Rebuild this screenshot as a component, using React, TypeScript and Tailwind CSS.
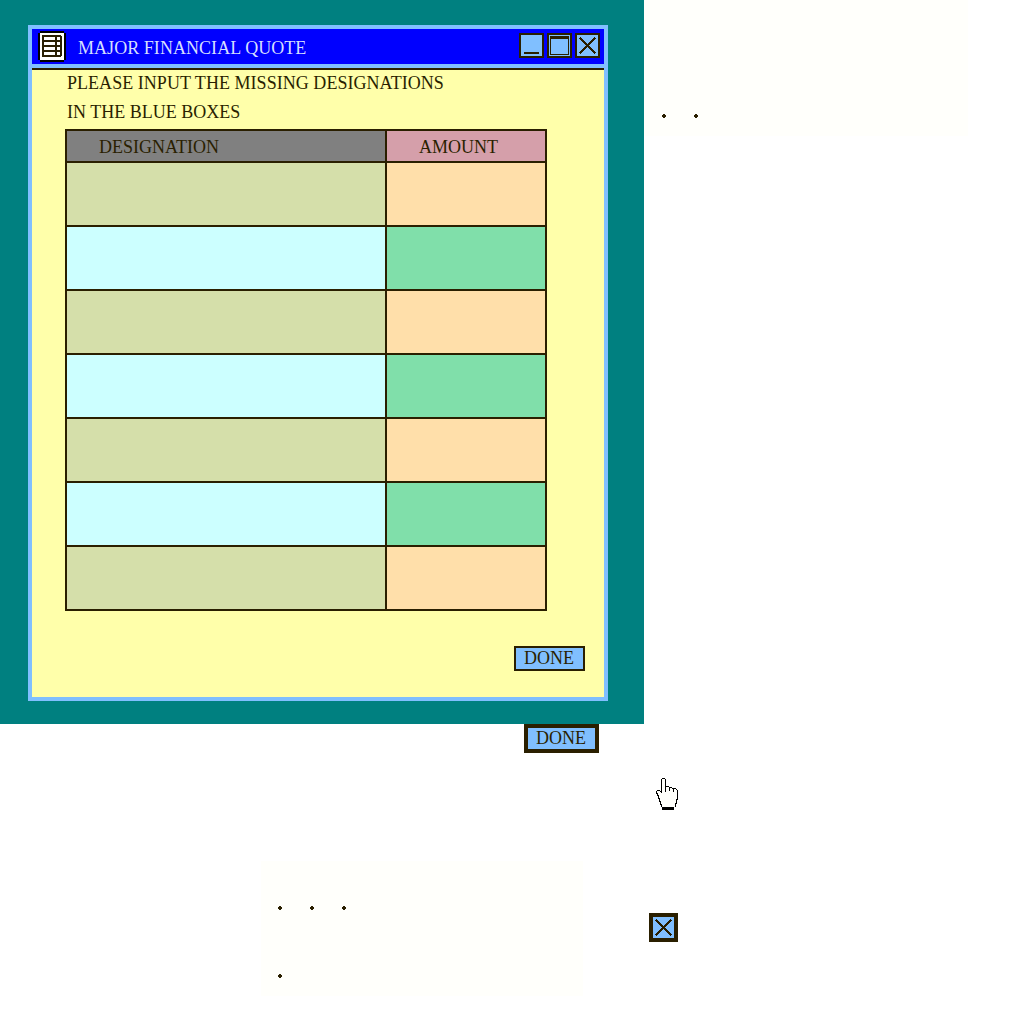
import React from "react";

const INK = "#2a1f00";

function CloseGlyph({ className }: { className?: string }) {
  return (
    <svg className={className} width="17" height="17" viewBox="0 0 17 17" shapeRendering="crispEdges">
      <path d="M0.7 0.7L16.3 16.3M16.3 0.7L0.7 16.3" stroke={INK} strokeWidth="2.2" fill="none" />
    </svg>
  );
}

function SheetIcon() {
  return (
    <svg width="28" height="31" viewBox="0 0 28 31" shapeRendering="crispEdges">
      <path d="M2 0h24v2h2v27h-2v2H2v-2H0V2h2z" fill="#000" />
      <path d="M2 2h24v27H2z" fill="#fffffb" />
      <path d="M4 4h19v1h1v20h-1v1H4z" fill={INK} />
      <path d="M6 6h11v3H6zM6 11h11v3H6zM6 16h11v3H6zM6 21h11v3H6zM19 6h3v3h-3zM19 11h3v3h-3zM19 16h3v3h-3zM19 21h3v3h-3z" fill="#fffffb" />
    </svg>
  );
}

function HandCursor() {
  return (
    <svg width="22" height="32" viewBox="0 0 22 32" shapeRendering="crispEdges">
      <path d="M6 1h3v8h4v1h4v1h3v1h1v10h-1v4h-1v3H6v-3H5v-3H4v-3H3v-3H2v-2H1v-3h4V1z" fill="#fffffb" />
      <path
        fill="#000"
        d="M6 0h3v1H6zM5 1h1v14H5zM9 1h1v13H9zM10 8h3v1h-3zM13 9h1v4h-1zM14 9h2v1h-2zM16 10h1v1h1v3h-1v-3h-1zM17 10h3v1h-3zM20 11h1v1h-1zM21 12h1v10h-1zM20 21h1v5h-1zM19 25h1v4h-1zM1 12h3v1H1zM4 13h1v1H4zM0 13h1v3H0zM1 15h1v3H1zM2 17h1v4H2zM3 20h1v4H3zM4 23h1v4H4zM5 26h1v3H5zM6 29h12v3H6z"
      />
    </svg>
  );
}

function Dot() {
  return (
    <svg width="4" height="4" viewBox="0 0 4 4" shapeRendering="crispEdges">
      <path d="M1 0h2v1h1v2H3v1H1V3H0V1h1z" fill={INK} />
    </svg>
  );
}

function TitleBar() {
  return (
    <div className="flex h-[35px] items-start bg-[#0000ff]">
      <div className="ml-1.5 mt-0.5">
        <SheetIcon />
      </div>
      <h1 className="ml-3 mt-[9px] flex-1 tracking-[0.05px] text-[#d5dfff]">MAJOR FINANCIAL QUOTE</h1>
      <div className="mr-1 mt-1 flex gap-[3px]">
        <button className="flex size-[25px] items-end justify-center border-2 border-[#2a1f00] bg-[#80bfff] pb-0.5">
          <span className="h-0.5 w-[15px] bg-[#2a1f00]" />
        </button>
        <button className="size-[25px] border-2 border-[#2a1f00] bg-[#80bfff] p-px">
          <span className="block size-[19px] border border-t-3 border-[#2a1f00]" />
        </button>
        <button className="flex size-[25px] items-center justify-center border-2 border-[#2a1f00] bg-[#80bfff]">
          <CloseGlyph />
        </button>
      </div>
    </div>
  );
}

function QuoteTable() {
  const rows = [0, 1, 2, 3, 4, 5, 6];
  return (
    <div className="ml-[33px] mt-[7px] grid w-[482px] grid-cols-[318px_158px] gap-0.5 bg-[#2a1f00] p-0.5">
      <div className="h-[30px] bg-[#808080] pl-8 pt-1.5">DESIGNATION</div>
      <div className="h-[30px] bg-[#d59faa] pl-8 pt-1.5">AMOUNT</div>
      {rows.map((row) => (
        <React.Fragment key={row}>
          <div className={row % 2 ? "h-[62px] bg-[#ccffff]" : "h-[62px] bg-[#d5dfaa]"} />
          <div className={row % 2 ? "h-[62px] bg-[#80dfaa]" : "h-[62px] bg-[#ffdfaa]"} />
        </React.Fragment>
      ))}
    </div>
  );
}

function QuoteWindow() {
  return (
    <div className="h-[676px] w-[580px] border-4 border-[#80bfff] bg-[#ffffaa]">
      <TitleBar />
      <div className="h-1 bg-[#80bfff]" />
      <div className="h-0.5 bg-[#2a1f00]" />
      <p className="ml-[35px] mt-[3px] tracking-[0.04px]">PLEASE INPUT THE MISSING DESIGNATIONS</p>
      <p className="ml-[35px] mt-[9px]">IN THE BLUE BOXES</p>
      <QuoteTable />
      <button className="ml-[482px] mt-[35px] flex h-[25px] w-[71px] items-start border-2 border-[#2a1f00] bg-[#80bfff] pl-2">
        DONE
      </button>
    </div>
  );
}

export default function App() {
  return (
    <div className="h-[1024px] w-[1024px] overflow-hidden bg-white font-['Liberation_Serif',serif] text-[18px] leading-5 whitespace-nowrap text-[#2a1f00]">
      <div className="flex h-[724px]">
        <div className="h-[724px] w-[644px] bg-[#008080] pl-7 pt-[25px]">
          <QuoteWindow />
        </div>
        <div className="flex h-[136px] w-[324px] gap-7 bg-[#fffffb] pl-[18px] pt-[114px]">
          <Dot />
          <Dot />
        </div>
      </div>
      <div className="flex h-[300px]">
        <div className="w-[644px]">
          <button className="ml-[524px] flex h-[29px] w-[75px] items-start border-4 border-[#2a1f00] bg-[#80bfff] pl-2">
            DONE
          </button>
          <div className="ml-[261px] mt-[108px] h-[135px] w-[322px] bg-[#fffffb] pl-[17px] pt-[45px]">
            <div className="flex gap-7">
              <Dot />
              <Dot />
              <Dot />
            </div>
            <div className="mt-16">
              <Dot />
            </div>
          </div>
        </div>
        <div>
          <div className="ml-3 mt-[54px]">
            <HandCursor />
          </div>
          <button className="ml-[5px] mt-[103px] flex size-[29px] items-center justify-center border-4 border-[#2a1f00] bg-[#80bfff]">
            <CloseGlyph />
          </button>
        </div>
      </div>
    </div>
  );
}
